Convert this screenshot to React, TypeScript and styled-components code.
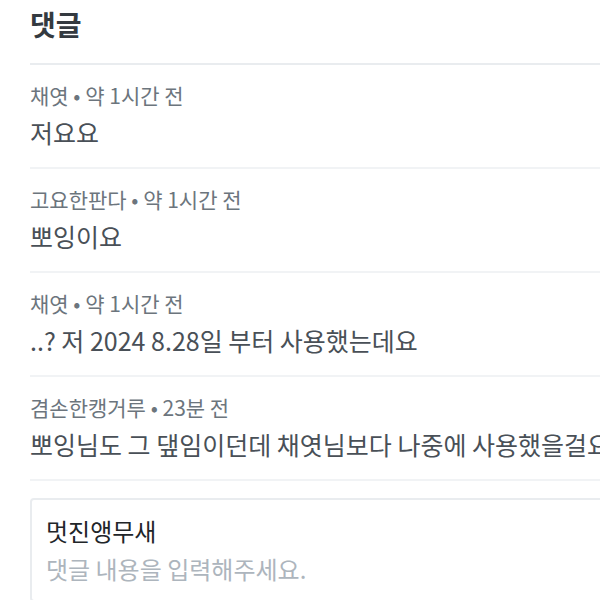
import React from "react";
import styled, { createGlobalStyle } from "styled-components";

const GlobalStyle = createGlobalStyle`
  html, body {
    margin: 0;
    padding: 0;
    background: #ffffff;
    overflow: hidden;
  }
  body {
    font-family: "Noto Sans CJK KR", "Noto Sans", sans-serif;
  }
`;

const Page = styled.div`
  width: 720px;
  padding: 0 0 0 30px;
  box-sizing: border-box;
`;

const Title = styled.h2`
  margin: 0;
  padding: 4px 0 19px;
  font-size: 28px;
  line-height: 40px;
  font-weight: 700;
  color: #343a40;
`;

const CommentList = styled.ul`
  list-style: none;
  margin: 0;
  padding: 0;
  border-top: 2px solid #e9ecef;
`;

const CommentItem = styled.li`
  display: flex;
  flex-direction: column;
  gap: 5px;
  padding: 15px 0 18px;
  border-bottom: 2px solid #f1f3f5;
`;

const Meta = styled.div`
  font-size: 21px;
  line-height: 30px;
  color: #6c757d;
`;

const Body = styled.div`
  font-size: 25px;
  line-height: 34px;
  color: #495057;
  white-space: nowrap;
`;

const InputBox = styled.div`
  margin-top: 17px;
  padding: 14px 14px;
  border: 2px solid #e9ecef;
  border-radius: 4px;
  display: flex;
  flex-direction: column;
  gap: 4px;
`;

const Author = styled.div`
  font-size: 24px;
  line-height: 34px;
  color: #212529;
`;

const Placeholder = styled.div`
  font-size: 24px;
  line-height: 34px;
  color: #adb5bd;
`;

const comments = [
  { author: "채엿", time: "약 1시간 전", text: "저요요" },
  { author: "고요한판다", time: "약 1시간 전", text: "뽀잉이요" },
  { author: "채엿", time: "약 1시간 전", text: "..? 저 2024 8.28일 부터 사용했는데요" },
  {
    author: "겸손한캥거루",
    time: "23분 전",
    text: "뽀잉님도 그 댚임이던데 채엿님보다 나중에 사용했을걸요",
  },
];

export default function App() {
  return (
    <>
      <GlobalStyle />
      <Page>
        <Title>댓글</Title>
        <CommentList>
          {comments.map((c, i) => (
            <CommentItem key={i}>
              <Meta>
                {c.author} • {c.time}
              </Meta>
              <Body>{c.text}</Body>
            </CommentItem>
          ))}
        </CommentList>
        <InputBox>
          <Author>멋진앵무새</Author>
          <Placeholder>댓글 내용을 입력해주세요.</Placeholder>
        </InputBox>
      </Page>
    </>
  );
}
